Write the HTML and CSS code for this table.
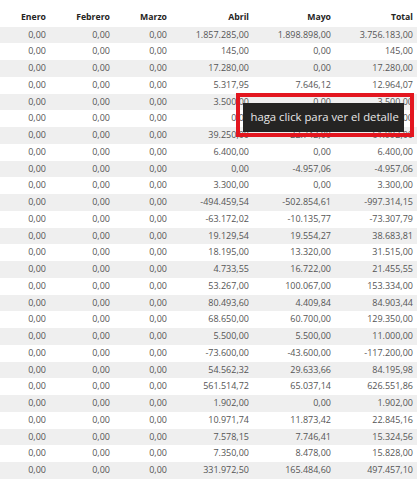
FILE: index.html
```html
<!DOCTYPE html>
<html lang="es">
<head>
<meta charset="utf-8">
<title>Tabla</title>
<link rel="stylesheet" href="styles.css">
</head>
<body>
<div class="table">
  <div class="row head"><span>Enero</span><span>Febrero</span><span>Marzo</span><span>Abril</span><span>Mayo</span><span>Total</span></div>
  <div class="row"><span>0,00</span><span>0,00</span><span>0,00</span><span>1.857.285,00</span><span>1.898.898,00</span><span>3.756.183,00</span></div>
  <div class="row"><span>0,00</span><span>0,00</span><span>0,00</span><span>145,00</span><span>0,00</span><span>145,00</span></div>
  <div class="row"><span>0,00</span><span>0,00</span><span>0,00</span><span>17.280,00</span><span>0,00</span><span>17.280,00</span></div>
  <div class="row"><span>0,00</span><span>0,00</span><span>0,00</span><span>5.317,95</span><span>7.646,12</span><span>12.964,07</span></div>
  <div class="row"><span>0,00</span><span>0,00</span><span>0,00</span><span>3.500,00</span><span>0,00</span><span>3.500,00</span></div>
  <div class="row"><span>0,00</span><span>0,00</span><span>0,00</span><span>0,00</span><span>0,00</span><span>0,00</span></div>
  <div class="row"><span>0,00</span><span>0,00</span><span>0,00</span><span>39.250,00</span><span>22.742,00</span><span>61.992,00</span></div>
  <div class="row"><span>0,00</span><span>0,00</span><span>0,00</span><span>6.400,00</span><span>0,00</span><span>6.400,00</span></div>
  <div class="row"><span>0,00</span><span>0,00</span><span>0,00</span><span>0,00</span><span>-4.957,06</span><span>-4.957,06</span></div>
  <div class="row"><span>0,00</span><span>0,00</span><span>0,00</span><span>3.300,00</span><span>0,00</span><span>3.300,00</span></div>
  <div class="row"><span>0,00</span><span>0,00</span><span>0,00</span><span>-494.459,54</span><span>-502.854,61</span><span>-997.314,15</span></div>
  <div class="row"><span>0,00</span><span>0,00</span><span>0,00</span><span>-63.172,02</span><span>-10.135,77</span><span>-73.307,79</span></div>
  <div class="row"><span>0,00</span><span>0,00</span><span>0,00</span><span>19.129,54</span><span>19.554,27</span><span>38.683,81</span></div>
  <div class="row"><span>0,00</span><span>0,00</span><span>0,00</span><span>18.195,00</span><span>13.320,00</span><span>31.515,00</span></div>
  <div class="row"><span>0,00</span><span>0,00</span><span>0,00</span><span>4.733,55</span><span>16.722,00</span><span>21.455,55</span></div>
  <div class="row"><span>0,00</span><span>0,00</span><span>0,00</span><span>53.267,00</span><span>100.067,00</span><span>153.334,00</span></div>
  <div class="row"><span>0,00</span><span>0,00</span><span>0,00</span><span>80.493,60</span><span>4.409,84</span><span>84.903,44</span></div>
  <div class="row"><span>0,00</span><span>0,00</span><span>0,00</span><span>68.650,00</span><span>60.700,00</span><span>129.350,00</span></div>
  <div class="row"><span>0,00</span><span>0,00</span><span>0,00</span><span>5.500,00</span><span>5.500,00</span><span>11.000,00</span></div>
  <div class="row"><span>0,00</span><span>0,00</span><span>0,00</span><span>-73.600,00</span><span>-43.600,00</span><span>-117.200,00</span></div>
  <div class="row"><span>0,00</span><span>0,00</span><span>0,00</span><span>54.562,32</span><span>29.633,66</span><span>84.195,98</span></div>
  <div class="row"><span>0,00</span><span>0,00</span><span>0,00</span><span>561.514,72</span><span>65.037,14</span><span>626.551,86</span></div>
  <div class="row"><span>0,00</span><span>0,00</span><span>0,00</span><span>1.902,00</span><span>0,00</span><span>1.902,00</span></div>
  <div class="row"><span>0,00</span><span>0,00</span><span>0,00</span><span>10.971,74</span><span>11.873,42</span><span>22.845,16</span></div>
  <div class="row"><span>0,00</span><span>0,00</span><span>0,00</span><span>7.578,15</span><span>7.746,41</span><span>15.324,56</span></div>
  <div class="row"><span>0,00</span><span>0,00</span><span>0,00</span><span>7.350,00</span><span>8.478,00</span><span>15.828,00</span></div>
  <div class="row"><span>0,00</span><span>0,00</span><span>0,00</span><span>331.972,50</span><span>165.484,60</span><span>497.457,10</span></div>
</div>
<div class="highlight"></div>
<div class="tooltip">haga click para ver el detalle</div>
</body>
</html>
```
FILE: styles.css
```css
html, body {
  margin: 0;
  padding: 0;
  background: #ffffff;
}
body {
  width: 417px;
  height: 487px;
  overflow: hidden;
  position: relative;
  font-family: "Open Sans", "Noto Sans", sans-serif;
}
.table {
  display: flex;
  flex-direction: column;
}
.row {
  display: grid;
  grid-template-columns: 50px 64px 57px 82px 82px 82px;
  height: 16.75px;
  align-items: center;
  font-size: 9px;
  color: #555555;
}
.row span {
  text-align: right;
  padding-right: 4px;
  white-space: nowrap;
  line-height: 16.75px;
}
.row:nth-child(even) {
  background: #efefef;
}
.row.head {
  height: 26.6px;
  align-items: end;
  color: #252423;
  font-weight: 700;
  font-size: 8.7px;
}
.row.head span {
  line-height: 13px;
  padding-bottom: 3px;
}
.highlight {
  position: absolute;
  left: 235.5px;
  top: 92.7px;
  width: 178.5px;
  height: 44px;
  box-sizing: border-box;
  border: 4.5px solid #e3161f;
}
.tooltip {
  position: absolute;
  left: 243px;
  top: 103.3px;
  width: 160.5px;
  height: 28.3px;
  box-sizing: border-box;
  background: #252423;
  color: #e8e8e8;
  font-size: 11.3px;
  line-height: 28.3px;
  padding-left: 7.5px;
  padding-bottom: 0;
  white-space: nowrap;
  display: flex;
  align-items: center;
}
```
